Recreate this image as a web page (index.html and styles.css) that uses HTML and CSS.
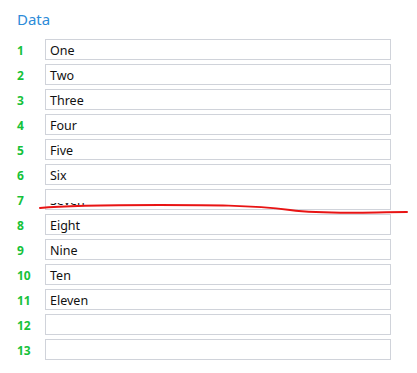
FILE: index.html
```html
<!DOCTYPE html>
<html>
<head>
<meta charset="utf-8">
<link rel="stylesheet" href="styles.css">
</head>
<body>
<div class="panel">
  <div class="title">Data</div>
  <div class="rows">
    <div class="row"><span class="num">1</span><div class="field">One</div></div>
    <div class="row"><span class="num">2</span><div class="field">Two</div></div>
    <div class="row"><span class="num">3</span><div class="field">Three</div></div>
    <div class="row"><span class="num">4</span><div class="field">Four</div></div>
    <div class="row"><span class="num">5</span><div class="field">Five</div></div>
    <div class="row"><span class="num">6</span><div class="field">Six</div></div>
    <div class="row"><span class="num">7</span><div class="field field-cut">Seven<span class="cover"></span></div></div>
    <div class="row"><span class="num">8</span><div class="field">Eight</div></div>
    <div class="row"><span class="num">9</span><div class="field">Nine</div></div>
    <div class="row"><span class="num">10</span><div class="field">Ten</div></div>
    <div class="row"><span class="num">11</span><div class="field">Eleven</div></div>
    <div class="row"><span class="num">12</span><div class="field"></div></div>
    <div class="row"><span class="num">13</span><div class="field"></div></div>
  </div>
  <svg class="scribble" width="417" height="373" viewBox="0 0 417 373">
    <path d="M40 208 C 70 205, 110 205, 160 205 S 250 205, 290 210 S 370 212, 407 212" fill="none" stroke="#e81414" stroke-width="2" stroke-linecap="round"/>
  </svg>
</div>
</body>
</html>
```
FILE: styles.css
```css
html, body {
  margin: 0;
  padding: 0;
  background: #ffffff;
}
.panel {
  position: relative;
  width: 417px;
  height: 373px;
  box-sizing: border-box;
  padding: 9px 0 0 17px;
  font-family: "Noto Sans", "Open Sans", sans-serif;
}
.title {
  color: #2d8bd8;
  font-size: 15px;
  line-height: 20px;
  height: 30px;
}
.rows {
  display: flex;
  flex-direction: column;
  gap: 4px;
}
.row {
  display: flex;
  align-items: center;
  height: 21px;
}
.num {
  width: 28px;
  color: #16c23a;
  font-size: 12px;
  font-weight: 700;
  padding-top: 1px;
}
.field {
  position: relative;
  box-sizing: border-box;
  width: 346px;
  height: 21px;
  border: 1px solid #d0d3da;
  padding: 1px 0 0 4px;
  font-size: 12.5px;
  line-height: 19px;
  color: #111111;
  overflow: hidden;
}
.cover {
  position: absolute;
  left: 0;
  right: 3px;
  top: -1px;
  height: 14px;
  background: #ffffff;
}
.scribble {
  position: absolute;
  left: 0;
  top: 0;
  pointer-events: none;
}
```
